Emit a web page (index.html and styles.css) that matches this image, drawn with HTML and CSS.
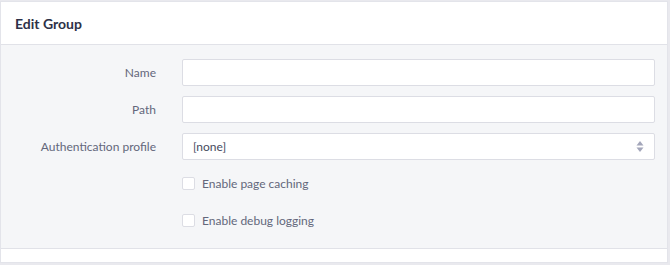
FILE: index.html
```html
<!DOCTYPE html>
<html lang="en">
<head>
    <meta charset="UTF-8">
    <title>Edit Group</title>
    <link rel="stylesheet" href="styles.css">
</head>
<body>
    <div class="panel">
        <div class="panel-head">
            <h2>Edit Group</h2>
        </div>
        <form class="panel-body">
            <label class="field-label" for="name">Name</label>
            <input class="field" id="name" type="text">

            <label class="field-label" for="path">Path</label>
            <input class="field" id="path" type="text">

            <label class="field-label" for="auth">Authentication profile</label>
            <div class="select">
                <span>[none]</span>
                <svg width="8" height="13" viewBox="0 0 8 13">
                    <path d="M4 1 L7.5 5.5 H0.5 Z" fill="#a3a6ba"/>
                    <path d="M4 12 L7.5 7.5 H0.5 Z" fill="#a3a6ba"/>
                </svg>
            </div>

            <span></span>
            <label class="check"><span class="box"></span>Enable page caching</label>

            <span></span>
            <label class="check"><span class="box"></span>Enable debug logging</label>
        </form>
        <div class="panel-foot"></div>
    </div>
</body>
</html>
```

FILE: styles.css
```css
body {
    font-family: Lato, "Open Sans", sans-serif;
    background-color: #e9e9ee;
    margin: 0;
    padding: 1px 2px 2px 0;
}
.panel {
    background-color: #fff;
    border: 1px solid #e3e4ea;
}
.panel-head {
    height: 42px;
    display: flex;
    align-items: center;
    padding: 0 14px;
    border-bottom: 1px solid #e1e2e8;
}
.panel-head h2 {
    margin: 0;
    font-size: 14px;
    font-weight: 700;
    color: #2d3148;
}
.panel-body {
    background-color: #f5f6f8;
    display: grid;
    grid-template-columns: 155px 1fr;
    column-gap: 26px;
    row-gap: 10px;
    padding: 14px 12px 14px 0;
    border-bottom: 1px solid #e1e2e8;
    margin: 0;
}
.field-label {
    align-self: center;
    text-align: right;
    font-size: 12px;
    color: #63677b;
}
.field, .select {
    box-sizing: border-box;
    height: 27px;
    border: 1px solid #dcdde4;
    border-radius: 2px;
    background-color: #fff;
    margin: 0;
}
.select {
    display: flex;
    align-items: center;
    justify-content: space-between;
    padding: 0 10px 0 10px;
    font-size: 12px;
    color: #464a60;
}
.check {
    display: flex;
    align-items: center;
    height: 27px;
    font-size: 12px;
    color: #63677b;
}
.box {
    width: 11px;
    height: 11px;
    border: 1px solid #dcdde4;
    border-radius: 2px;
    background-color: #fff;
    margin-right: 7px;
}
.panel-foot {
    height: 13px;
}
```
